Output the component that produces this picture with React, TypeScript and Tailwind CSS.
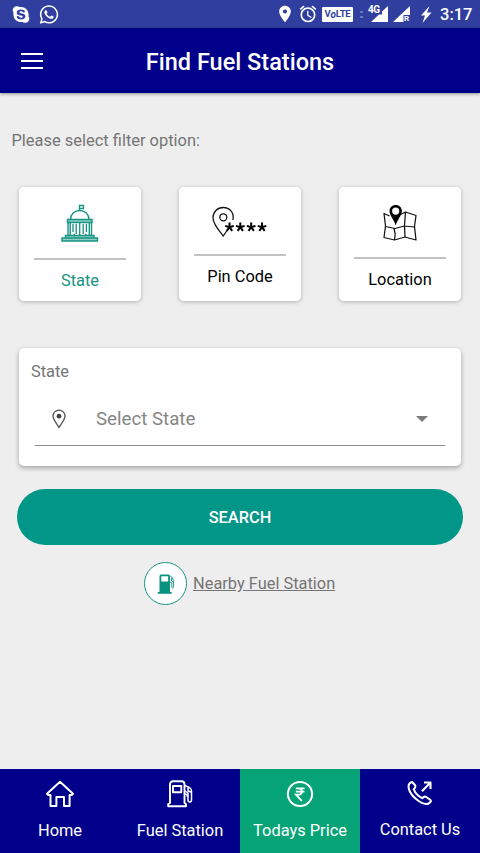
import type { ReactNode } from 'react'
import { FaSkype, FaWhatsapp } from 'react-icons/fa'
import { MdLocationOn, MdAlarm } from 'react-icons/md'

function CapitolIcon() {
  return (
    <svg width="38" height="38" viewBox="0 0 38 38" fill="none" stroke="#179482" strokeWidth="1.4">
      <path d="M18.5 6.5V1.5H22.5V4.5H18.5" />
      <path d="M9.5 15.5C9.5 10 13.5 6.5 18.7 6.5S28 10 28 15.5" />
      <path d="M6.5 15.5H31V18.5H6.5Z" fill="#8fcfc5" />
      <path d="M7 18.5V31.5M30.5 18.5V31.5M9.2 18.5V31.5M28.3 18.5V31.5" />
      <path d="M12 20V28M15.2 20V30M18.7 19V31.5M22.2 20V30M25.4 20V28M12.5 30.5H14M24 30.5H25.5" strokeWidth="1.3" />
      <path d="M4.5 31.5H33V34H4.5ZM1 34H36.5V37H1Z" fill="#8fcfc5" />
    </svg>
  )
}

function PinCodeIcon() {
  return (
    <svg width="56" height="32" viewBox="0 0 56 32" fill="none" stroke="#161616">
      <path d="M21 14C22.4 6.4 17.4 1.5 11.3 1.5C5.2 1.5 1 6 1 11.8C1 18.5 7.5 25 11.3 30L15 24.5" strokeWidth="1.3" />
      <circle cx="11.3" cy="11.3" r="3.5" strokeWidth="1.3" />
      {[17.5, 28.3, 39.2, 50].map((x) => (
        <path
          key={x}
          transform={`translate(${x} 21.2)`}
          d="M0 0V-4.6M0 0L4.3 -1.3M0 0L2.7 3.7M0 0L-2.7 3.7M0 0L-4.3 -1.3"
          stroke="#000"
          strokeWidth="2"
        />
      ))}
    </svg>
  )
}

function MapIcon() {
  return (
    <svg width="36" height="38" viewBox="0 0 36 38" fill="none" stroke="#111" strokeWidth="1.25" strokeLinejoin="round">
      <path d="M7.5 12L2 9.5L3.5 22L2 33.5L12.5 36L23 33L34 36L32.5 22.5L34 11.5L23.5 8L18.5 10.5" />
      <path d="M3.5 22.5L13 24.5L22.5 22L32.5 23M12 24.5L13.2 30L12.5 36M23.5 8L22.5 21L23 33" />
      <path
        d="M13.7 1C17.2 1 19.9 3.6 19.9 7C19.9 11.3 15.5 15.5 13.7 21.5C11.9 15.5 7.5 11.3 7.5 7C7.5 3.6 10.2 1 13.7 1ZM13.7 3.5A3.6 3.6 0 1 0 13.7 10.7A3.6 3.6 0 1 0 13.7 3.5Z"
        fill="#000"
        stroke="none"
        fillRule="evenodd"
      />
    </svg>
  )
}

function HomeIcon() {
  return (
    <svg width="30" height="28" viewBox="0 0 30 28" fill="none" stroke="#fff" strokeWidth="2" strokeLinejoin="round">
      <path d="M15 1.8L28 13.8L26.7 15H24.6V26H19V17H11.4V26H5.5V15H3.3L2 13.8Z" />
    </svg>
  )
}

function PumpIcon() {
  return (
    <svg width="26" height="28" viewBox="0 0 26 28" fill="none" stroke="#fff" strokeWidth="1.9" strokeLinejoin="round">
      <path d="M3 23V4.5Q3 1.2 6 1.2H14.5Q17.5 1.2 17.5 4.5V23L19 24V26.3H1.2V24Z" />
      <path d="M6 6H14.3V12.2H6Z" />
      <path d="M18 5.5L23 8Q24.5 9 24.5 11V20Q24.5 22 22.8 22T21 20V13L18 11M18 14Q20.5 14 20.5 17M21 7V11L24 12" strokeWidth="1.5" />
    </svg>
  )
}

function RupeeIcon() {
  return (
    <svg width="28" height="28" viewBox="0 0 28 28" fill="none" stroke="#fff">
      <circle cx="14" cy="14" r="12.1" strokeWidth="2" />
      <path d="M9.8 8.3H18.5M9.8 11.6H18.5M9.8 8.3H12.5C17 8.3 17 14.7 12.5 14.7H10L15.8 20.8" strokeWidth="1.8" />
    </svg>
  )
}

function CallIcon() {
  return (
    <svg width="26" height="26" viewBox="0 0 26 26" fill="none" stroke="#fff" strokeWidth="2" strokeLinejoin="round">
      <path d="M5.2 2L8.3 5.5Q8.8 7.4 6.7 9.2C8.2 13.2 11.3 16.5 15.5 18.2Q17.3 15.9 19.2 17L23.5 20Q24.3 21 23.2 22.2C20.5 25 16.5 24.4 12 21.3C6.5 17.5 2.7 13.2 1.7 8.3C1.1 5 2.5 2.7 5.2 2Z" />
      <path d="M15 11.2L23.2 2.8M17 2.5H23.5V9" strokeWidth="2.1" />
    </svg>
  )
}

function NearbyPumpIcon() {
  return (
    <svg width="18" height="20" viewBox="0 0 18 20" fill="none">
      <path
        d="M2.5 18V2Q2.5 .5 4 .5H11.5Q13 .5 13 2V18H14.7V19.7H.8V18ZM4.3 2.3V7.5H11.2V2.3Z"
        fill="#0b9180"
        fillRule="evenodd"
      />
      <path d="M13.2 2L15.3 3.5L16.6 7.5V13.5Q15.8 15 14.8 13.5V9L13 8M14.6 4V7L16.3 8" stroke="#0b9180" strokeWidth=".9" />
    </svg>
  )
}

function StatusBar() {
  return (
    <div className="flex h-7 items-center justify-between bg-[#303f9f] pl-3 pr-[7px] text-white">
      <div className="flex items-center gap-[9px]">
        <FaSkype className="h-[19px] w-[18px]" />
        <FaWhatsapp className="h-[21px] w-[20px]" />
      </div>
      <div className="flex items-center">
        <MdLocationOn className="h-[20px] w-[20px]" />
        <MdAlarm className="ml-[3px] h-[20px] w-[20px]" />
        <span className="ml-[4px] flex h-[15px] w-[31px] items-center justify-center rounded-[1px] bg-white text-[9.5px] font-bold tracking-tight text-[#303f9f]">
          V<i className="text-[10px]">o</i>LTE
        </span>
        <span className="ml-[7px] flex w-[3px] flex-col gap-[3px]">
          <span className="h-[2px] bg-[#6673bd]" />
          <span className="h-[2px] bg-[#6673bd]" />
        </span>
        <span className="relative ml-[8px] h-4 w-[17px]">
          <svg width="17" height="16" viewBox="0 0 17 16" fill="#fff">
            <path d="M17 0V16H0L8 8.5H11V5.6Z" />
          </svg>
          <span className="absolute -left-[3px] -top-[1px] text-[10px] leading-[10px] font-bold tracking-tighter">4G</span>
        </span>
        <span className="relative ml-[5px] h-4 w-[17px]">
          <svg width="17" height="16" viewBox="0 0 17 16" fill="#fff">
            <path d="M17 0V9H10.5V16H0Z" />
          </svg>
          <span className="absolute left-[11px] top-[9px] text-[8px] leading-[8px] font-bold">R</span>
        </span>
        <svg className="ml-[10px]" width="12" height="17" viewBox="0 0 12 17" fill="#fff">
          <path d="M9.5 0L1 9.5H5L2.5 17L11.5 6.5H7Z" />
        </svg>
        <span className="ml-[8px] w-[33px] pt-[2px] text-[16.5px] font-medium leading-[26px]">3:17</span>
      </div>
    </div>
  )
}

interface FilterCardProps {
  label: string
  icon: ReactNode
  iconBox: string
  labelColor: string
}

function FilterCard({ label, icon, iconBox, labelColor }: FilterCardProps) {
  return (
    <button className="flex h-[114px] w-[122px] flex-col items-center rounded-[5px] bg-white shadow-[0_1px_4px_rgba(0,0,0,0.25)]">
      <span className={`flex w-full items-start justify-center ${iconBox}`}>{icon}</span>
      <span className="h-[2px] w-[92px] bg-[#c2c2c2]" />
      <span className={`mt-[10px] text-[16.4px] leading-[22px] ${labelColor}`}>{label}</span>
    </button>
  )
}

interface NavItemProps {
  label: string
  icon: ReactNode
  active?: boolean
  labelClass?: string
}

function NavItem({ label, icon, active, labelClass = 'mt-[11px]' }: NavItemProps) {
  return (
    <a className={`flex flex-1 flex-col items-center pt-[11px] text-white ${active ? 'bg-[#06a377]' : ''}`}>
      {icon}
      <span className={`text-[16.4px] leading-6 whitespace-nowrap ${labelClass}`}>{label}</span>
    </a>
  )
}

export default function App() {
  return (
    <div className="flex h-[853px] w-[480px] flex-col overflow-hidden bg-[#eeeeee] font-[Roboto,sans-serif]">
      <StatusBar />

      {/* Header */}
      <header className="grid h-[65px] shrink-0 grid-cols-[64px_1fr_64px] items-center bg-[#00008b] shadow-[0_1px_3px_rgba(0,0,0,0.4)]">
        <div className="ml-[21px] flex w-[22px] flex-col gap-[5px]">
          <span className="h-[2px] bg-white" />
          <span className="h-[2px] bg-white" />
          <span className="h-[2px] bg-white" />
        </div>
        <h1 className="pt-[3px] text-center text-[23.5px] leading-8 font-medium text-white">Find Fuel Stations</h1>
      </header>

      <main className="flex flex-1 flex-col">
        <p className="mt-9 ml-[11.5px] text-[16.45px] leading-6 text-[#757575]">Please select filter option:</p>

        {/* Filter cards */}
        <div className="mt-[34px] flex justify-between px-[19px]">
          <FilterCard label="State" icon={<CapitolIcon />} iconBox="h-[71px] pt-[17px]" labelColor="text-[#179482]" />
          <FilterCard label="Pin Code" icon={<PinCodeIcon />} iconBox="h-[67px] pt-[19px]" labelColor="text-black" />
          <FilterCard label="Location" icon={<MapIcon />} iconBox="h-[70px] pt-[17px]" labelColor="text-black" />
        </div>

        {/* State select */}
        <section className="mx-[19px] mt-[47px] h-[118px] rounded-[5px] bg-white px-4 shadow-[0_2px_5px_rgba(0,0,0,0.32)]">
          <p className="-ml-1 pt-3 text-[16.4px] leading-6 text-[#757575]">State</p>
          <div className="mt-[9px] flex h-[53px] items-center border-b border-[#8c8c8c] pr-[17px] pl-[17px]">
            <svg width="14" height="20" viewBox="0 0 14 20" fill="none">
              <path d="M7 1.2C10.4 1.2 13 3.8 13 7.1C13 10.8 9.3 14.5 7 18.5C4.7 14.5 1 10.8 1 7.1C1 3.8 3.6 1.2 7 1.2Z" stroke="#555" strokeWidth="1.3" />
              <circle cx="7" cy="7.2" r="2.4" fill="#444" />
            </svg>
            <span className="ml-[30px] flex-1 text-[18.7px] text-[#858585]">Select State</span>
            <svg width="12" height="6" viewBox="0 0 12 6" fill="#7b7b7b">
              <path d="M0 0H12L6 6Z" />
            </svg>
          </div>
        </section>

        <button className="mx-[17px] mt-[23px] h-14 rounded-full bg-[#009688] pt-[2px] text-[16.4px] font-medium text-white">
          SEARCH
        </button>

        <a className="mt-[17px] ml-[144px] flex items-center gap-[6px] text-[#757575]">
          <span className="flex h-[43px] w-[43px] items-center justify-center rounded-full border border-[#179482] bg-white">
            <NearbyPumpIcon />
          </span>
          <span className="pt-[2px] text-[16.4px] underline">Nearby Fuel Station</span>
        </a>
      </main>

      {/* Bottom navigation */}
      <nav className="flex h-[84px] shrink-0 bg-[#00008b]">
        <NavItem label="Home" icon={<HomeIcon />} />
        <NavItem label="Fuel Station" icon={<PumpIcon />} />
        <NavItem label="Todays Price" icon={<RupeeIcon />} active />
        <NavItem label="Contact Us" icon={<CallIcon />} labelClass="mt-[12px]" />
      </nav>
    </div>
  )
}
